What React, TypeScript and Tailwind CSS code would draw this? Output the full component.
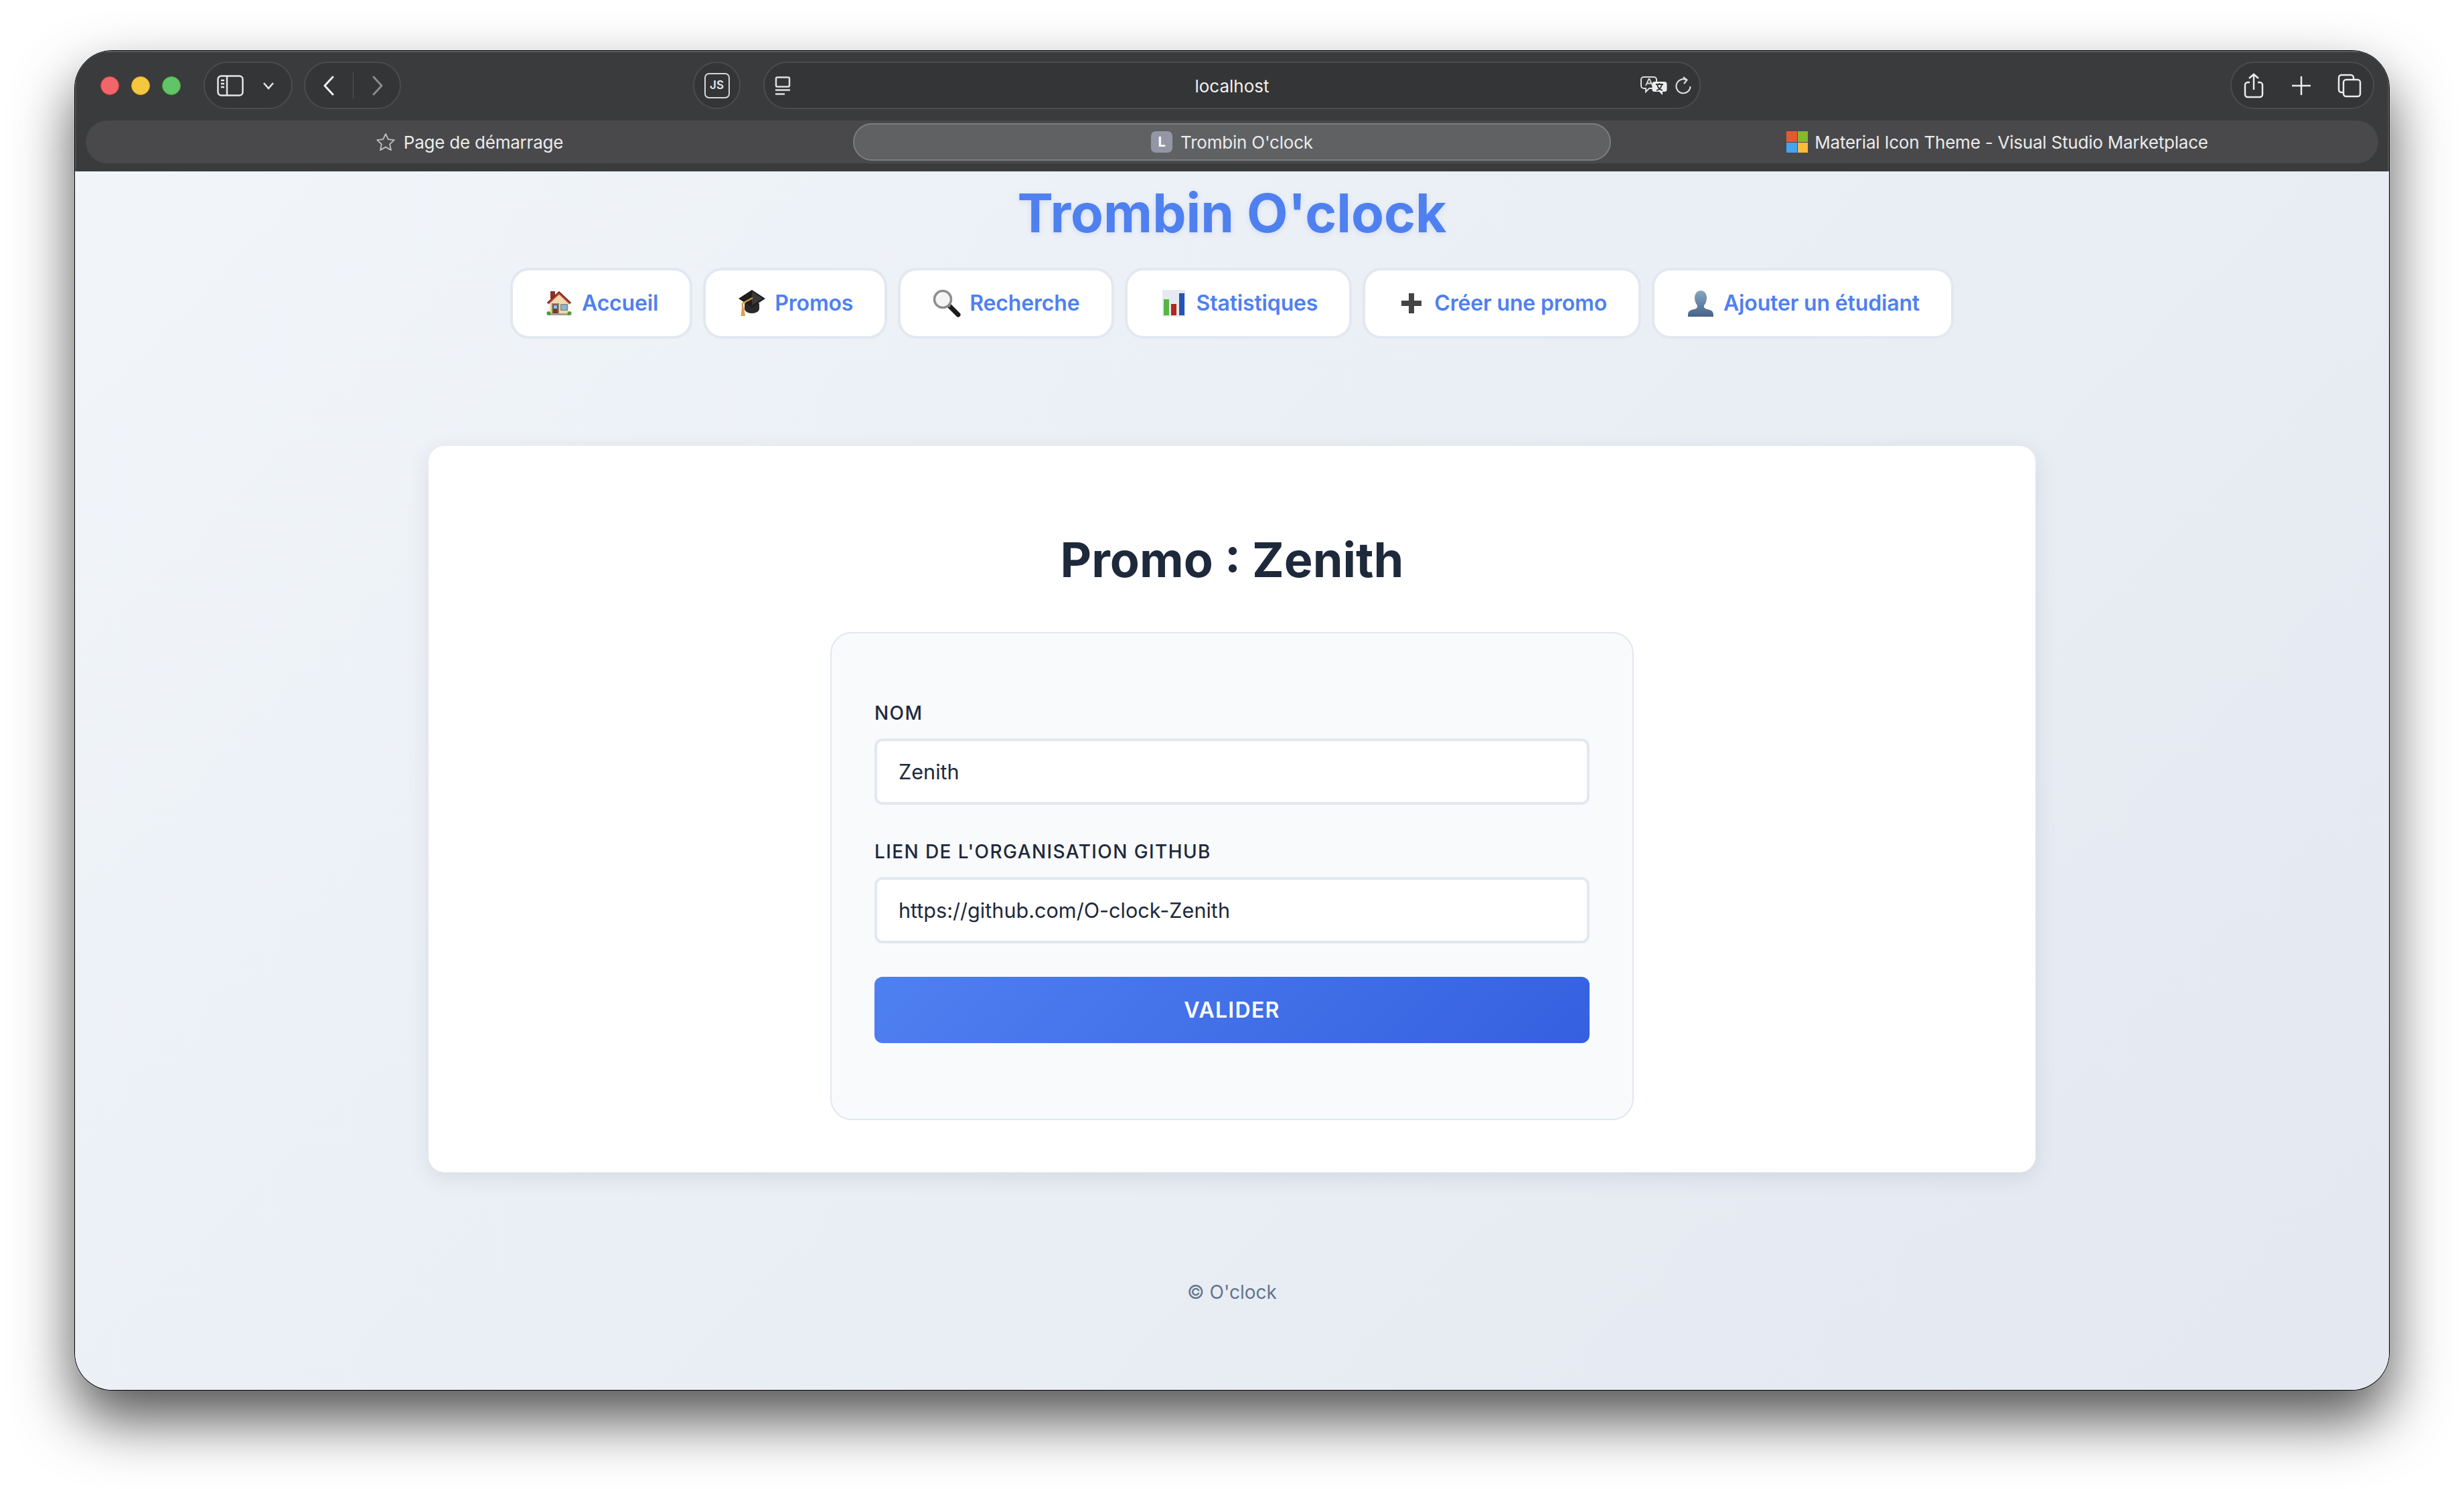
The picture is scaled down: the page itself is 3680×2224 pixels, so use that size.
import type { ReactNode } from "react";

const HouseIcon = () => (
  <svg width="38" height="38" viewBox="0 0 38 38">
    <rect x="6" y="1" width="7" height="11" fill="#8f2f26" />
    <path d="M5 17 19 5l14 12v17H5z" fill="#f0d9ac" />
    <path d="M1 18 19 1l18 17-2.500 2.500L19 6 3.500 20.500z" fill="#c8443a" />
    <path d="M19 1 1 18l1 1L19 3l17 16 1-1z" fill="#5a2a22" />
    <rect x="8" y="19" width="11" height="17" fill="#8a8070" />
    <rect x="10" y="21" width="7" height="15" fill="#7a3a22" />
    <rect x="11" y="22" width="5" height="5" fill="#8ec3e8" />
    <rect x="21" y="20" width="11" height="10" fill="#8c8a80" />
    <rect x="22.500" y="21.500" width="8" height="7" fill="#86b8e0" />
    <rect x="4" y="34" width="30" height="3" fill="#a8a090" />
    <circle cx="3.500" cy="34" r="3" fill="#4e9a3a" />
    <circle cx="34.500" cy="34" r="3" fill="#4e9a3a" />
  </svg>
);

const CapIcon = () => (
  <svg width="40" height="40" viewBox="0 0 40 40">
    <path d="M9 20v8c0 4 5 7 11 7s11-3 11-7v-8z" fill="#2a2a2a" />
    <path d="M20 0 40 13 20 26 0 13z" fill="#1d1d1d" />
    <path d="M20 2 36 13 20 23z" fill="#3a3a3a" />
    <path d="M21 12 6 20" stroke="#d99a3c" strokeWidth="2.500" />
    <path d="M6 20v6" stroke="#d99a3c" strokeWidth="2.500" />
    <path d="M3.500 39 5 25h3l2 14z" fill="#e0a050" />
  </svg>
);

const SearchIcon = () => (
  <svg width="42" height="42" viewBox="0 0 42 42">
    <path d="m25 25 13 13" stroke="#1c1c1c" strokeWidth="7" strokeLinecap="round" />
    <path d="m23 23 3 3" stroke="#777" strokeWidth="4" />
    <circle cx="15" cy="15" r="12.500" fill="#f4f4f4" stroke="#8d8d8d" strokeWidth="3.500" />
    <path d="M8 12c1-3 3-5 6-6" stroke="#fff" strokeWidth="2" fill="none" />
  </svg>
);

const ChartIcon = () => (
  <svg width="34" height="40" viewBox="0 0 34 40">
    <rect width="34" height="40" fill="#e4eaf0" />
    <rect x="2" y="14" width="8" height="24" fill="#58b544" />
    <rect x="13" y="21" width="8" height="17" fill="#b5261c" />
    <rect x="25" y="5" width="8" height="33" fill="#2455b3" />
  </svg>
);

const PlusIcon = () => (
  <svg width="32" height="32" viewBox="0 0 32 32">
    <path d="M12 1h8v11h11v8H20v11h-8V20H1v-8h11z" fill="#444" />
  </svg>
);

const BustIcon = () => (
  <svg width="40" height="40" viewBox="0 0 40 40">
    <defs>
      <linearGradient id="bust" x1="0" y1="0" x2="0" y2="1">
        <stop offset="0" stopColor="#86a6c2" />
        <stop offset="1" stopColor="#47628a" />
      </linearGradient>
    </defs>
    <path
      d="M20 1c6 0 9 5 9 11 0 5-2 9-4 11v3c1 2 5 3 9 4 3 1 5 3 5 8v2H1v-2c0-5 2-7 5-8 4-1 8-2 9-4v-3c-2-2-4-6-4-11 0-6 3-11 9-11z"
      fill="url(#bust)"
    />
  </svg>
);

const navItems: { label: string; icon: ReactNode }[] = [
  { label: "Accueil", icon: <HouseIcon /> },
  { label: "Promos", icon: <CapIcon /> },
  { label: "Recherche", icon: <SearchIcon /> },
  { label: "Statistiques", icon: <ChartIcon /> },
  { label: "Créer une promo", icon: <PlusIcon /> },
  { label: "Ajouter un étudiant", icon: <BustIcon /> },
];

const Toolbar = () => (
  <div className="h-[180px] shrink-0 bg-[#3a3b3d] shadow-[inset_0_2px_0_#5d5e60,inset_2px_0_0_#515254,inset_-2px_0_0_#515254] font-['Inter',sans-serif]">
    <div className="flex items-start pl-[38px] pt-4">
      <div className="flex h-[71px] w-[120px] items-center gap-[18px]">
        <span className="size-7 rounded-full border border-[#d8403c] bg-[#f0666a]" />
        <span className="size-7 rounded-full border border-[#dba520] bg-[#f4c83e]" />
        <span className="size-7 rounded-full border border-[#3fa83f] bg-[#62c466]" />
      </div>

      <div className="ml-[34px] flex h-[71px] w-[133px] items-center rounded-full border-2 border-[#4b4c4e] bg-[#343537] pl-[18px]">
        <svg width="40" height="32" viewBox="0 0 40 32" fill="none" stroke="#e6e6e6" strokeWidth="2.500">
          <rect x="1.500" y="1.500" width="37" height="29" rx="5" />
          <path d="M15 1.500v29M6 8h5M6 13h5M6 18h5" />
        </svg>
        <svg className="ml-[28px]" width="18" height="12" viewBox="0 0 18 12" fill="none" stroke="#e6e6e6" strokeWidth="2.500">
          <path d="m2 2 7 8 7-8" />
        </svg>
      </div>

      <div className="ml-[17px] flex h-[71px] w-[145px] items-center rounded-full border-2 border-[#4b4c4e] bg-[#343537] pl-[26px]">
        <svg width="18" height="30" viewBox="0 0 18 30" fill="none" stroke="#f0f0f0" strokeWidth="3" strokeLinecap="round" strokeLinejoin="round">
          <path d="M15 2 3 15l12 13" />
        </svg>
        <span className="ml-[27px] h-[40px] w-px bg-[#55565a]" />
        <svg className="ml-[27px]" width="18" height="30" viewBox="0 0 18 30" fill="none" stroke="#8a8b8d" strokeWidth="3" strokeLinecap="round" strokeLinejoin="round">
          <path d="m3 2 12 13L3 28" />
        </svg>
      </div>

      <div className="ml-[436px] flex h-[71px] w-[71px] items-center justify-center rounded-full border-2 border-[#4b4c4e] bg-[#343537]">
        <span className="flex h-[38px] w-[38px] items-center justify-center rounded-[7px] border-2 border-[#d8d8d8] text-[17px] font-semibold leading-none text-[#e8e8e8]">
          JS
        </span>
      </div>

      <div className="ml-[34px] flex h-[71px] w-[1400px] items-center rounded-full border-2 border-[#4b4c4e] bg-[#343537] pl-[15px] pr-[12px]">
        <svg width="24" height="28" viewBox="0 0 24 28" fill="none" stroke="#e0e0e0" strokeWidth="2.500">
          <rect x="2" y="1.500" width="20" height="14" rx="2" />
          <path d="M1 20.500h22M1 26.500h14" />
        </svg>
        <span className="flex-1 pl-[49px] pt-[2px] text-center text-[26px] leading-none text-[#f0f0f0]">localhost</span>
        <svg width="40" height="28" viewBox="0 0 40 28">
          <path d="M5 1h15a4 4 0 0 1 4 4v9a4 4 0 0 1-4 4h-7l-5 5v-5H5a4 4 0 0 1-4-4V5a4 4 0 0 1 4-4z" fill="#343537" stroke="#dcdcdc" strokeWidth="2" />
          <path d="m8 14 4.500-10h1L18 14M10 10.500h6" fill="none" stroke="#dcdcdc" strokeWidth="1.800" />
          <path d="M21 8h15a3.500 3.500 0 0 1 3.500 3.500v8A3.500 3.500 0 0 1 36 23h-3v5l-5-5h-7a3.500 3.500 0 0 1-3.500-3.500v-8A3.500 3.500 0 0 1 21 8z" fill="#ececec" />
          <path d="M23 12h11M28.500 10v2M32 12c-1 5-4 8-8 9M25 12c1 5 4 8 8 9" fill="none" stroke="#343537" strokeWidth="1.800" />
        </svg>
        <svg className="ml-[12px]" width="24" height="28" viewBox="0 0 24 28" fill="none" stroke="#dcdcdc" strokeWidth="2.200">
          <path d="M17 5.500A10.500 10.500 0 1 0 22.500 15M12 1l5.500 4.500L13 11" />
        </svg>
      </div>

      <div className="ml-[791px] flex h-[71px] w-[215px] items-center rounded-full border-2 border-[#4b4c4e] bg-[#343537] pl-[18px]">
        <svg width="30" height="38" viewBox="0 0 30 38" fill="none" stroke="#ececec" strokeWidth="2.500">
          <path d="M9 14H6a4 4 0 0 0-4 4v14a4 4 0 0 0 4 4h18a4 4 0 0 0 4-4V18a4 4 0 0 0-4-4h-3M15 25V2M8 8l7-6 7 6" />
        </svg>
        <svg className="ml-[42px]" width="28" height="28" viewBox="0 0 28 28" stroke="#ececec" strokeWidth="2.500">
          <path d="M14 0v28M0 14h28" />
        </svg>
        <svg className="ml-[40px]" width="36" height="36" viewBox="0 0 36 36" fill="none" stroke="#ececec" strokeWidth="2.500">
          <path d="M8 28H6a4 4 0 0 1-4-4V6a4 4 0 0 1 4-4h14a4 4 0 0 1 4 4v2" />
          <rect x="9" y="9" width="25" height="25" rx="4" />
        </svg>
      </div>
    </div>

    <div className="mx-4 mt-[17px] flex h-16 items-center rounded-[32px] bg-[#49494b] text-[26px] leading-none tracking-[-0.22px] text-[#ebebeb]">
      <div className="flex flex-1 items-center justify-center gap-[12px]">
        <svg width="30" height="28" viewBox="0 0 30 28" fill="none" stroke="#c0c0c0" strokeWidth="1.800" strokeLinejoin="round">
          <path d="m15 2 3.800 8.200 9 1-6.700 6.100 1.900 8.800L15 21.600 7 26.100l1.900-8.800L2.200 11.200l9-1z" />
        </svg>
        <span className="pt-[2px]">Page de démarrage</span>
      </div>
      <div className="flex h-14 w-[1132px] items-center justify-center gap-[12px] rounded-[28px] border-2 border-[#7b7d7f] bg-[#5f6163]">
        <span className="flex size-8 items-center justify-center rounded-[7px] bg-[#9596a5] text-[20px] font-bold text-white">L</span>
        <span className="pt-[2px]">Trombin O'clock</span>
      </div>
      <div className="flex flex-1 items-center justify-center gap-[10px]">
        <span className="ml-[8px] grid size-8 grid-cols-2 gap-px">
          <span className="bg-[#e25a34]" />
          <span className="bg-[#86b735]" />
          <span className="bg-[#44a4ee]" />
          <span className="bg-[#f8bb3a]" />
        </span>
        <span className="pt-[2px]">Material Icon Theme - Visual Studio Marketplace</span>
      </div>
    </div>
  </div>
);

const Field = ({ label, value, className }: { label: string; value: string; className?: string }) => (
  <div className={className}>
    <label className="mb-[21px] block text-[28px] font-medium leading-[34px] tracking-[1.400px] text-[#1e293b]">
      {label}
    </label>
    <input
      readOnly
      value={value}
      className="block h-[99px] w-full rounded-[12px] border-4 border-[#e2e8f0] bg-white px-8 text-[30.600px] text-[#1e293b] outline-none"
    />
  </div>
);

export default function App() {
  return (
    <div className="h-[2224px] w-[3680px] overflow-hidden bg-white pl-[112px] pt-[76px] font-['Inter',sans-serif]">
      <div className="flex h-[2000px] w-[3456px] flex-col overflow-hidden rounded-[56px] shadow-[0_0_0_1px_#000,0_44px_88px_rgba(0,0,0,0.68)]">
        <Toolbar />

        <main className="flex flex-1 flex-col items-center bg-linear-135 from-[#f1f5f9] to-[#e3e8f1]">
          <h1 className="mt-[14px] text-[80px] font-bold leading-[96px] text-[#4f80f0] [text-shadow:0_2px_8px_rgba(79,128,240,0.18)]">
            Trombin O'clock
          </h1>

          <nav className="mt-[34px] flex gap-4">
            {navItems.map((item) => (
              <a
                key={item.label}
                className="flex h-[106px] items-center gap-3 rounded-[28px] border-4 border-[#e2e8f0] bg-white px-[47px] text-[32px] font-semibold tracking-[-0.16px] text-[#4f80f0]"
              >
                <span className="flex w-[44px] justify-center">{item.icon}</span>
                {item.label}
              </a>
            ))}
          </nav>

          <section className="mt-[160px] flex h-[1085px] w-[2400px] flex-col items-center rounded-[24px] bg-white pt-[127px] shadow-[0_8px_32px_rgba(30,41,59,0.1)]">
            <h2 className="text-[72px] font-bold leading-[86px] text-[#1e293b]">Promo : Zenith</h2>

            <form className="mt-[65px] h-[729px] w-[1200px] rounded-[32px] border-2 border-[#e2e8f0] bg-[#f8fafc] px-[64px] pt-[102px]">
              <Field label="NOM" value="Zenith" />
              <Field className="mt-[53px]" label="LIEN DE L'ORGANISATION GITHUB" value="https://github.com/O-clock-Zenith" />
              <button
                type="button"
                className="mt-[50px] h-[99px] w-full rounded-[12px] bg-linear-135 from-[#4f80f0] to-[#3560e0] text-[32px] font-semibold tracking-[1.300px] text-white"
              >
                VALIDER
              </button>
            </form>
          </section>

          <footer className="mt-[161px] text-[28px] leading-[36px] text-[#64748b]">© O'clock</footer>
        </main>
      </div>
    </div>
  );
}
